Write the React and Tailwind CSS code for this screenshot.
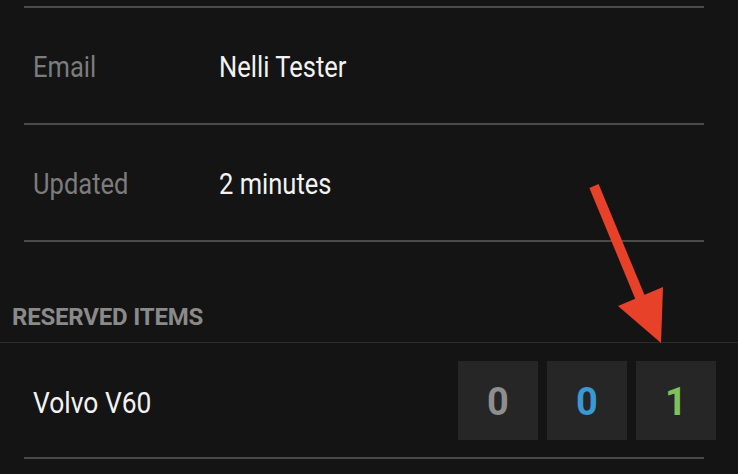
export default function App() {
  const rows = [
    { label: "Email", value: "Nelli Tester" },
    { label: "Updated", value: "2 minutes" },
  ]
  const counts = [
    { n: "0", color: "text-[#8e8e8e]" },
    { n: "0", color: "text-[#3a98d4]" },
    { n: "1", color: "text-[#7ec25c]" },
  ]

  return (
    <div
      className="relative w-[738px] h-[474px] overflow-hidden bg-[#141414]"
      style={{ fontFamily: "Roboto, 'Liberation Sans', sans-serif" }}
    >
      <div className="pt-[6px] pl-6 pr-[34px]">
        <div className="border-t-2 border-[#4a4a4a]" />
        {rows.map((row) => (
          <div key={row.label}>
            <div className="flex items-center h-[115px] pt-[4px] pl-[9px] text-[29px]">
              <div className="w-[186px]">
                <span className="inline-block origin-left scale-x-[0.88] text-[#7c7c7c]">{row.label}</span>
              </div>
              <span className="inline-block origin-left scale-x-[0.88] text-[#f2f2f2]">{row.value}</span>
            </div>
            <div className="border-t-2 border-[#4a4a4a]" />
          </div>
        ))}
      </div>

      <div className="h-[100px] flex items-end pb-[7px] pl-3 text-[24px] font-bold tracking-[-0.2px] text-[#8a8a8a]">
        RESERVED ITEMS
      </div>
      <div className="border-t border-[#2b2b2b]" />

      <div className="flex items-center justify-between h-[114px] pl-[33px] pr-[22px]">
        <span className="inline-block origin-left scale-x-[0.88] pt-[5px] text-[30px] text-[#f2f2f2]">Volvo V60</span>
        <div className="flex gap-[9px]">
          {counts.map((c, i) => (
            <div
              key={i}
              className={`w-[80px] h-[79px] flex items-center justify-center pt-[5px] bg-[#262626] text-[38px] font-bold ${c.color}`}
            >
              {c.n}
            </div>
          ))}
        </div>
      </div>
      <div className="pl-6 pr-[34px]">
        <div className="border-t-2 border-[#4a4a4a]" />
      </div>

      {/* annotation arrow */}
      <svg className="absolute left-0 top-0" width="738" height="474" viewBox="0 0 738 474">
        <line x1="594" y1="186" x2="642" y2="302" stroke="#e8412a" strokeWidth="10" />
        <polygon points="618,306 663,287 661,343" fill="#e8412a" />
      </svg>
    </div>
  )
}
